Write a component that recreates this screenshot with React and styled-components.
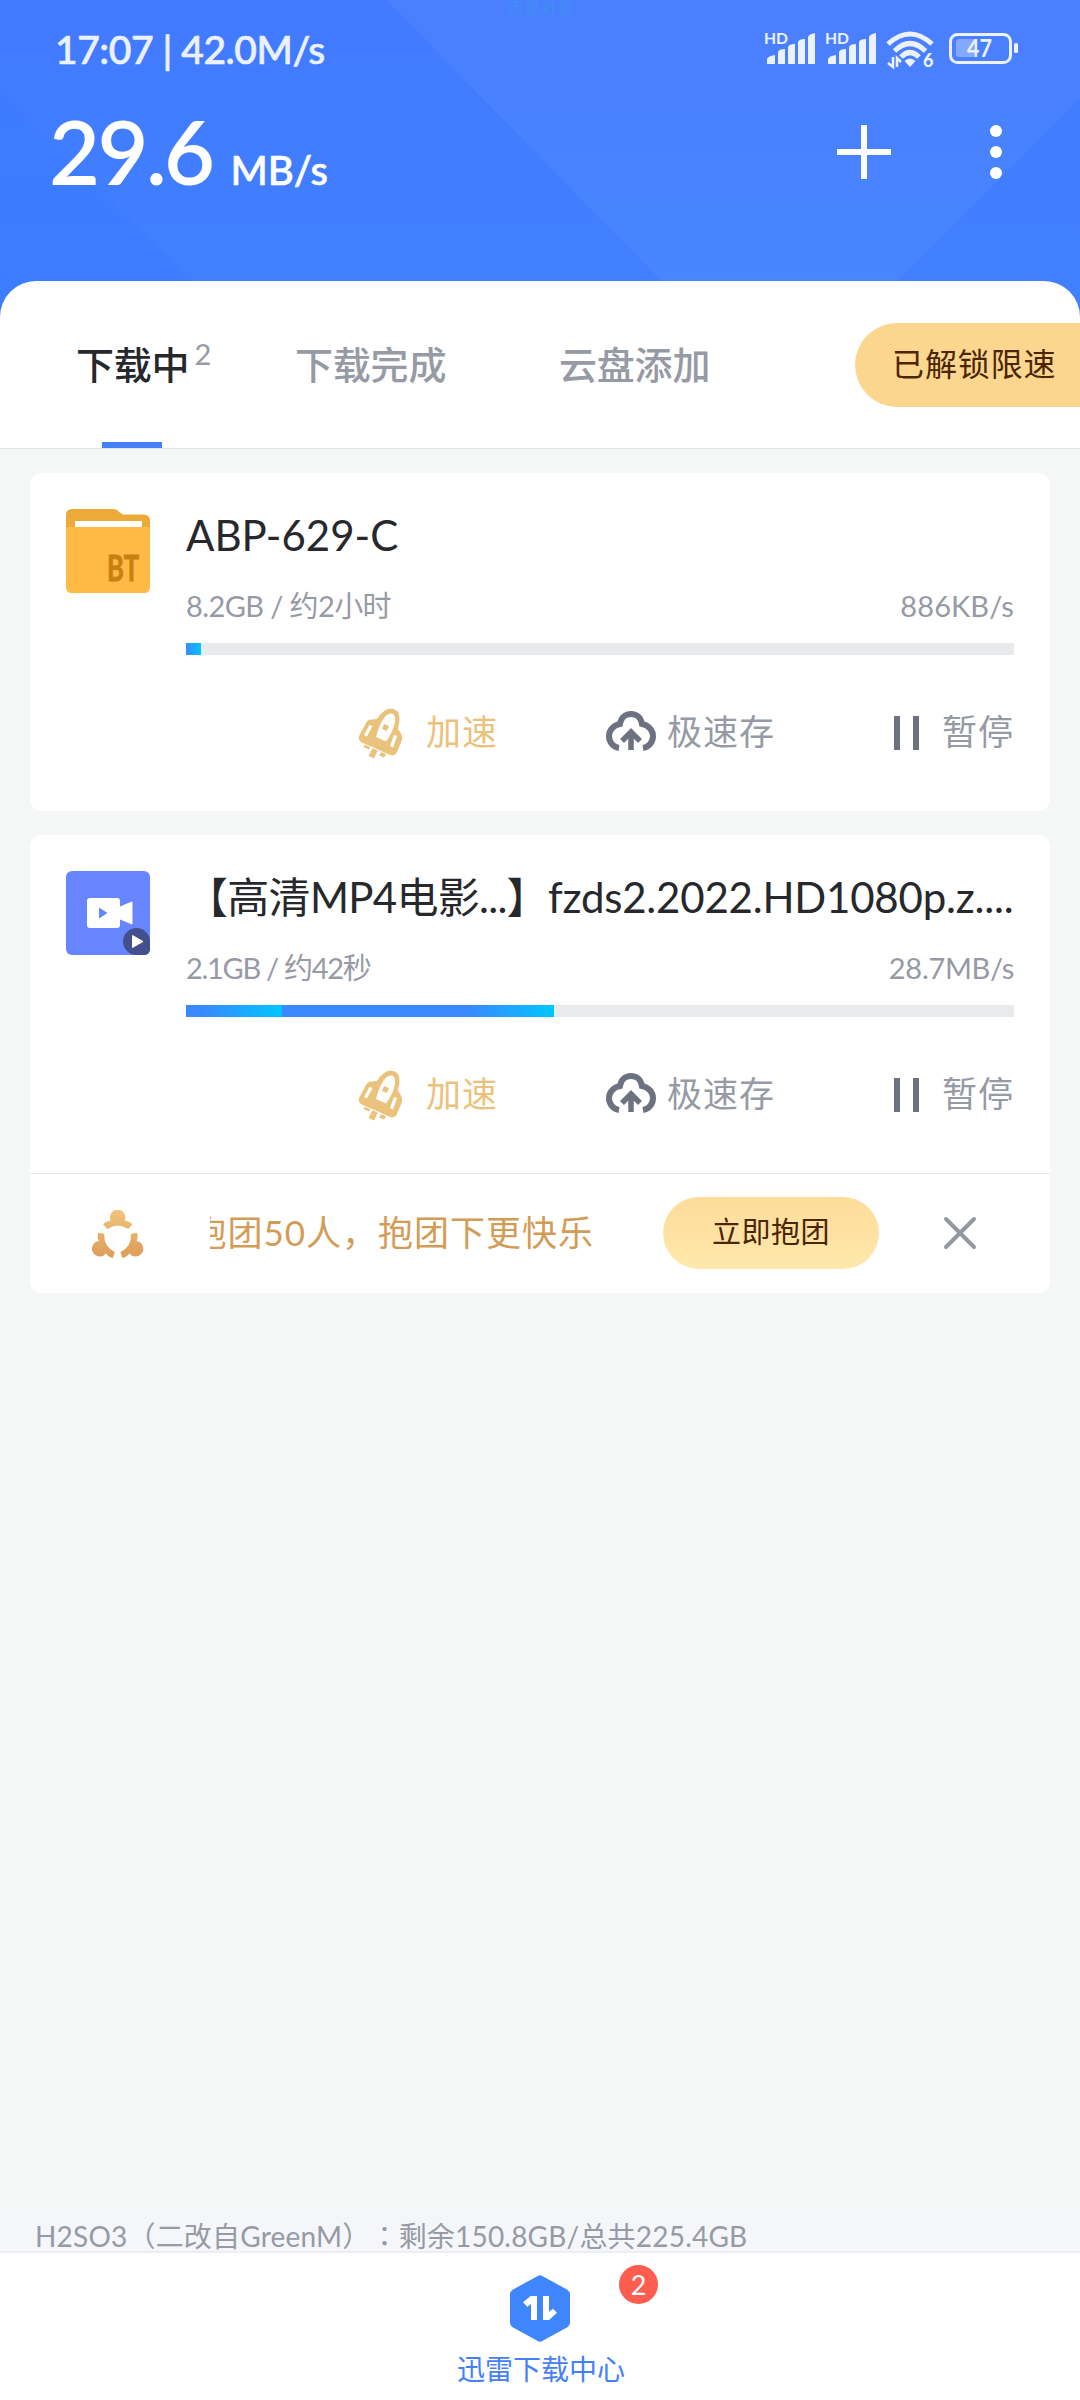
import React from 'react';
import styled, {createGlobalStyle, css} from "styled-components";

const GlobalStyle = createGlobalStyle`
  * {
    box-sizing: border-box;
  }

  body {
    margin: 0;
    background: #f5f7f7;
    font-family: Lato, "Noto Sans CJK SC", sans-serif;
  }

  svg {
    overflow: visible;
  }
`;

const Page = styled.div`
  display: flex;
  flex-direction: column;
  width: 1080px;
  height: 2400px;
  overflow: hidden;
  background: #f5f7f7;
`;

const Text = styled.span`
  display: block;
  flex: none;
  white-space: pre;
  font-size: ${({$size}) => $size}px;
  font-weight: ${({$weight}) => $weight || 400};
  letter-spacing: ${({$spacing}) => $spacing || 0}px;
  color: ${({$color}) => $color || '#959aa4'};
  -webkit-text-stroke: ${({$stroke}) => $stroke || 0}px currentColor;
`;

/* ---------- header ---------- */

const Header = styled.header`
  position: relative;
  flex: none;
  height: 322px;
  margin-bottom: -41px;
  background: linear-gradient(#427aff, #4080ff 281px);
`;

const HeaderArt = styled.svg`
  position: absolute;
  left: 0;
  top: 0;
`;

const Watermark = styled.div`
  position: absolute;
  left: 508px;
  top: 0;
  font-size: 16px;
  letter-spacing: 0.8px;
  line-height: 16px;
  color: #3a96ee;
  filter: blur(0.6px);
  opacity: 0.75;
`;

const StatusBar = styled.div`
  position: relative;
  display: flex;
  align-items: center;
  height: 98px;
  padding: 0 62px 0 55px;
  color: #ebf1ff;
`;

const StatusIcons = styled.div`
  display: flex;
  margin-left: auto;
`;

const SpeedBar = styled.div`
  position: relative;
  display: flex;
  align-items: center;
  height: 108px;
  padding: 0 78px 0 49px;
`;

const Speed = styled.div`
  display: flex;
  align-items: baseline;
  gap: 18px;
  margin-top: 16px;
  line-height: 108px;
`;

const HeaderButtons = styled.div`
  display: flex;
  align-items: center;
  gap: 99px;
  margin-left: auto;
`;

/* ---------- tabs ---------- */

const Tabs = styled.nav`
  position: relative;
  display: flex;
  flex: none;
  height: 168px;
  padding-left: 76px;
  background: #fff;
  border-bottom: 1px solid #e2e5e6;
  border-radius: 36px 36px 0 0;
`;

const Tab = styled.div`
  position: relative;
  display: flex;
  width: ${({$width}) => $width}px;
  line-height: 166px;

  ${({$active}) => $active && css`
    &::after {
      content: "";
      position: absolute;
      left: 26px;
      bottom: 0;
      width: 60px;
      height: 6px;
      background: #4480f8;
    }
  `}
`;

const TabCount = styled.sup`
  margin-left: 5px;
  font-size: 29px;
  line-height: 145px;
  color: #959aa4;
`;

const LimitPill = styled.div`
  display: flex;
  width: 225px;
  height: 84px;
  margin: 42px 0 0 auto;
  padding-left: 37px;
  line-height: 82px;
  background: #fcd68f;
  border-radius: 42px 0 0 42px;
`;

/* ---------- tasks ---------- */

const TaskList = styled.main`
  display: flex;
  flex: 1;
  flex-direction: column;
  gap: 24px;
  padding: 24px 30px 0;
`;

const Card = styled.section`
  overflow: hidden;
  background: #fff;
  border-radius: 12px;
`;

const TaskBody = styled.div`
  display: flex;
  gap: 36px;
  height: 338px;
  padding: 36px 36px 0;
`;

const TaskInfo = styled.div`
  flex: 1;
  min-width: 0;
`;

const TaskTitle = styled.div`
  display: flex;
  height: 52px;
  line-height: 53px;
`;

const TaskMeta = styled.div`
  display: flex;
  justify-content: space-between;
  height: 36px;
  margin-top: 27px;
  line-height: 36px;
`;

const Track = styled.div`
  display: flex;
  height: 12px;
  margin-top: 19px;
  background: #e8eaec;
`;

const Segment = styled.div`
  height: 100%;
  background: linear-gradient(90deg, #3a88fd ${({$from}) => $from}%, #00c6ff);
`;

const Actions = styled.div`
  display: flex;
  justify-content: flex-end;
  height: 60px;
  margin-top: 48px;
  line-height: 57px;
`;

const Action = styled.div`
  display: flex;
  gap: ${({$gap}) => $gap}px;
  margin-left: ${({$before}) => $before || 0}px;

  svg {
    align-self: center;
  }
`;

const Banner = styled.div`
  display: flex;
  align-items: center;
  height: 120px;
  padding: 0 0 2px 62px;
  border-top: 1px solid #e4e6e8;
`;

const Marquee = styled.div`
  display: flex;
  justify-content: flex-end;
  width: 384px;
  height: 60px;
  margin-left: 66px;
  line-height: 58px;
  overflow: hidden;
`;

const JoinButton = styled.div`
  display: flex;
  justify-content: center;
  width: 216px;
  height: 72px;
  margin: 0 65px 0 69px;
  line-height: 70px;
  background: linear-gradient(#fddc99, #ffe8ac);
  border-radius: 36px;
`;

/* ---------- bottom ---------- */

const StorageBar = styled.div`
  flex: none;
  height: 43px;
  padding-left: 35px;
  line-height: 55px;
  background: #f4f6fa;
  text-spacing-trim: space-all;
`;

const CenteredColon = styled.span`
  font-family: "Noto Sans CJK TC", sans-serif;
`;

const BottomBar = styled.footer`
  display: flex;
  flex: none;
  flex-direction: column;
  align-items: center;
  height: 149px;
  padding-top: 22px;
  background: #fff;
  border-top: 2px solid #eceef1;
`;

const BottomIcon = styled.div`
  position: relative;
  height: 67px;
`;

const Badge = styled.div`
  position: absolute;
  left: 109px;
  top: -10px;
  width: 39px;
  height: 39px;
  border-radius: 50%;
  background: #ff5d50;
  color: #fff;
  font-size: 27px;
  line-height: 39px;
  text-align: center;
`;

const BottomLabel = styled.div`
  margin-top: 7px;
  padding-left: 2px;
  line-height: 40px;
`;

/* ---------- icons ---------- */

const Signal = () => (
    <svg width="61" height="40" viewBox="0 0 61 40" fill="#ebf1ff">
        <text x="0" y="15" fontSize="16" fontWeight="700" textLength="24" lengthAdjust="spacingAndGlyphs">HD</text>
        <path d="M3 35v-5q1-3 8-4v9zM14 35v-12q1-3 7-3v15zM24 35v-17q1-3 7-3v20zM34 35v-22q1-3 7-3v25zM44 35v-27q1-3 7-4v31z"/>
    </svg>
);

const Wifi = () => (
    <svg width="63" height="40" viewBox="0 0 63 40" fill="none" stroke="#ebf1ff" strokeWidth="5">
        <path d="M2 15Q24-5 46 15M8.500 22Q24 7 39.500 22M15 28Q24 19 33 28"/>
        <path d="M18.500 32q5.500-5 11 0l-5.500 6z" fill="#ebf1ff" stroke="none"/>
        <path d="M7 28v10l-5-4M11 38v-9l4 4" strokeWidth="2.500"/>
        <text x="37" y="38" fontSize="18" fontWeight="900" fill="#ebf1ff" stroke="none">6</text>
    </svg>
);

const Battery = () => (
    <svg width="69" height="40" viewBox="0 0 69 40" fill="none">
        <rect x="1.500" y="5.500" width="60" height="28" rx="7" stroke="#ebf1ff" strokeWidth="3"/>
        <path d="M10 10H27V28H10Q7 28 7 25V13Q7 10 10 10" fill="#83a9ff"/>
        <rect x="65" y="14" width="4" height="10" rx="1.500" fill="#ebf1ff"/>
        <text x="18" y="28" fontSize="25" fontWeight="700" fill="#ebf1ff" textLength="25" lengthAdjust="spacingAndGlyphs">47</text>
    </svg>
);

const FolderIcon = () => (
    <svg width="84" height="84" viewBox="0 0 84 84">
        <path d="M0 20V6Q0 0 6 0H47Q51 0 53 3L57 5.500H78Q84 6 84 12V20Z" fill="#eeaa38"/>
        <path d="M0 18H84V78Q84 84 78 84H6Q0 84 0 78Z" fill="#ffba46"/>
        <path d="M9 12H76V18H9Z" fill="#fff"/>
        <text x="41" y="72" fontSize="37" fontWeight="700" fill="#c8800f" stroke="#c8800f" strokeWidth="0.800"
              textLength="32" lengthAdjust="spacingAndGlyphs">BT</text>
    </svg>
);

const VideoIcon = () => (
    <svg width="84" height="84" viewBox="0 0 84 84">
        <rect width="84" height="84" rx="6" fill="#6685ff"/>
        <rect x="21" y="27" width="33" height="30" rx="3" fill="#fff"/>
        <path d="M54 36L66 31V53L54 48Z" fill="#fff" stroke="#fff"/>
        <path d="M33 36.500L41.500 42L33 47.500Z" fill="#6685ff"/>
        <path d="M84 70.500V79Q83 84 78 84H70.500A13.500 13.500 0 1 1 84 70.500Z" fill="#43508d"/>
        <path d="M66.500 64.500L77 70.500L66.500 76.500Z" fill="#fff" stroke="#fff" strokeLinejoin="round"/>
    </svg>
);

const RocketIcon = () => (
    <svg width="46" height="51" viewBox="0 0 46 51" fill="#ebc27c">
        <path d="M33 0.500Q42 1 41.500 12L40 21Q45 27 44 32L38.500 45Q36 49 31 46.500L3.500 34.500Q0 32 1 28L8 15Q10 11 14 11.500L19 11Q25 1 33 0.500Z"/>
        <path d="M33.500 5.500Q38 6 37 14Q35 24 28 33.500L18 29Q21 17 26 10Q29 5.500 33.500 5.500Z" fill="#fff"/>
        <path d="M11.500 17L14.500 18L9 28.500L6 27ZM36 27L39 28L35 39.500L32 38Z" fill="#fff"/>
        <path d="M26 16L31 18L29 23L24 21Z"/>
        <path d="M7.500 35.500L13 38L11 41.500L5.500 39ZM15 39.500L20 42L16 50.500L10.500 48ZM24 43L29 45L26 49.500L21 47.500Z"/>
        <path d="M5 35.500L31 47" stroke="#fff" strokeWidth="1"/>
    </svg>
);

const CloudIcon = () => (
    <svg width="50" height="44" viewBox="0 0 50 44" fill="none" stroke="#6d7280" strokeWidth="6">
        <path d="M13 37C7 36 3 31 3 25C3 19 8 14 14 13C15 7 19 3 25 3C31 3 35 7 36 13C42 14 47 19 47 25C47 31 43 36 37 37"/>
        <path d="M25 39V22M16 30L25 21L34 30" strokeWidth="5.500"/>
    </svg>
);

const PauseIcon = () => (
    <svg width="26" height="34" viewBox="0 0 26 34" fill="#6d7280">
        <path d="M0 0h6v34h-6zM19 0h6v34h-6z"/>
    </svg>
);

const GroupIcon = () => (
    <svg width="52" height="48" viewBox="38 85 156 144">
        <defs>
            <linearGradient id="gold" x1="0" y1="0" x2="0" y2="1">
                <stop offset="0" stopColor="#f2c67c"/>
                <stop offset="1" stopColor="#dc9c58"/>
            </linearGradient>
            <path id="member" d="M94 120A23 23 0 1 1 136 120Q149 120 159 131L147 145Q115 124 84 145L71 131Q82 120 94 120Z"/>
            <clipPath id="members">
                <use href="#member"/>
                <use href="#member" transform="rotate(120 115 173)"/>
                <use href="#member" transform="rotate(240 115 173)"/>
            </clipPath>
        </defs>
        <rect x="36" y="80" width="160" height="152" fill="url(#gold)" clipPath="url(#members)"/>
    </svg>
);

const CloseIcon = () => (
    <svg width="32" height="32" viewBox="0 0 32 32" stroke="#9298a2" strokeWidth="4" strokeLinecap="round">
        <path d="M2 2L30 30M30 2L2 30"/>
    </svg>
);

const HexIcon = () => (
    <svg width="60" height="67" viewBox="0 0 180 201" fill="#3f86fc">
        <path d="M82 4Q90-3 98 4L172 44Q180 49 180 58V143Q180 152 172 157L98 197Q90 203 82 197L8 157Q0 152 0 143V58Q0 49 8 44Z"/>
        <path d="M62 63H81V135H63V87L52 95L39 82ZM99 63H117V110L129 101L141 113L117 135H99Z" fill="#fff"/>
    </svg>
);

const tasks = [
    {
        id: 1,
        icon: <FolderIcon/>,
        title: [{text: 'ABP-629-C', spacing: 0}],
        meta: '8.2GB / 约2小时',
        metaSpacing: -0.6,
        speed: '886KB/s',
        speedSpacing: 0.1,
        segments: [{width: 14.5, from: 0}],
    },
    {
        id: 2,
        icon: <VideoIcon/>,
        title: [
            {text: '【高清MP4电影...】', spacing: -0.7},
            {text: 'fzds2.2022.HD1080p.z....', spacing: -0.2},
        ],
        meta: '2.1GB / 约42秒',
        metaSpacing: -1.3,
        speed: '28.7MB/s',
        speedSpacing: -0.3,
        segments: [{width: 96, from: 15}, {width: 272, from: 68}],
        banner: true,
    },
];

const Task = ({task}) => (
    <Card>
        <TaskBody>
            {task.icon}
            <TaskInfo>
                <TaskTitle>
                    {task.title.map(({text, spacing}) => (
                        <Text key={text} $size={42} $spacing={spacing} $color="#26282c">{text}</Text>
                    ))}
                </TaskTitle>
                <TaskMeta>
                    <Text $size={29} $spacing={task.metaSpacing}>{task.meta}</Text>
                    <Text $size={29} $spacing={task.speedSpacing}>{task.speed}</Text>
                </TaskMeta>
                <Track>
                    {task.segments.map(({width, from}) => (
                        <Segment key={width} $from={from} style={{width}}/>
                    ))}
                </Track>
                <Actions>
                    <Action $gap={22}>
                        <RocketIcon/>
                        <Text $size={35} $spacing={1} $color="#ebc27c">加速</Text>
                    </Action>
                    <Action $gap={11} $before={108}>
                        <CloudIcon/>
                        <Text $size={35} $spacing={1}>极速存</Text>
                    </Action>
                    <Action $gap={22} $before={119}>
                        <PauseIcon/>
                        <Text $size={35} $spacing={1}>暂停</Text>
                    </Action>
                </Actions>
            </TaskInfo>
        </TaskBody>
        {task.banner && (
            <Banner>
                <GroupIcon/>
                <Marquee>
                    <Text $size={35} $spacing={1} $color="#d39c56">抱团50人，抱团下更快乐</Text>
                </Marquee>
                <JoinButton>
                    <Text $size={29} $spacing={0.5} $color="#4a2606">立即抱团</Text>
                </JoinButton>
                <CloseIcon/>
            </Banner>
        )}
    </Card>
);

const App = () => {
    return (
        <Page>
            <GlobalStyle/>
            <Header>
                <HeaderArt width="1080" height="322" viewBox="0 0 1080 322">
                    <path d="M386 0H1080V98L856 322H702Z" fill="#fff" fillOpacity="0.045"/>
                    <path d="M0 92L230 322H0Z" fill="#3a7aff" fillOpacity="0.6"/>
                </HeaderArt>
                <Watermark>流星社区</Watermark>
                <StatusBar>
                    <Text $size={39} $weight={500} $spacing={-0.45} $stroke={0.7} $color="#ebf1ff">17:07 | 42.0M/s</Text>
                    <StatusIcons>
                        <Signal/>
                        <Signal/>
                        <Wifi/>
                        <Battery/>
                    </StatusIcons>
                </StatusBar>
                <SpeedBar>
                    <Speed>
                        <Text $size={88} $weight={600} $spacing={-2.6} $color="#fff">29.6</Text>
                        <Text $size={40} $weight={500} $stroke={0.7} $color="#fff">MB/s</Text>
                    </Speed>
                    <HeaderButtons>
                        <svg width="54" height="54" viewBox="0 0 54 54" stroke="#fff" strokeWidth="6">
                            <path d="M27 0V54M0 27H54"/>
                        </svg>
                        <svg width="12" height="54" viewBox="0 0 12 54" fill="#fff">
                            <circle cx="6" cy="6" r="6"/>
                            <circle cx="6" cy="27" r="6"/>
                            <circle cx="6" cy="48" r="6"/>
                        </svg>
                    </HeaderButtons>
                </SpeedBar>
            </Header>
            <Tabs>
                <Tab $width={219} $active>
                    <Text $size={38} $weight={500} $spacing={-0.2} $color="#26282c">下载中</Text>
                    <TabCount>2</TabCount>
                </Tab>
                <Tab $width={264}>
                    <Text $size={38} $weight={500} $spacing={-0.2}>下载完成</Text>
                </Tab>
                <Tab $width={160}>
                    <Text $size={38} $weight={500} $spacing={-0.2}>云盘添加</Text>
                </Tab>
                <LimitPill>
                    <Text $size={32} $spacing={0.9} $color="#4a2606">已解锁限速</Text>
                </LimitPill>
            </Tabs>
            <TaskList>
                {tasks.map((task) => <Task key={task.id} task={task}/>)}
            </TaskList>
            <StorageBar>
                <Text $size={28} $spacing={0.2}>
                    H2SO3（二改自GreenM）<CenteredColon>：</CenteredColon>剩余150.8GB/总共225.4GB
                </Text>
            </StorageBar>
            <BottomBar>
                <BottomIcon>
                    <HexIcon/>
                    <Badge>2</Badge>
                </BottomIcon>
                <BottomLabel>
                    <Text $size={28} $color="#4480f8">迅雷下载中心</Text>
                </BottomLabel>
            </BottomBar>
        </Page>
    );
};

export default App;
